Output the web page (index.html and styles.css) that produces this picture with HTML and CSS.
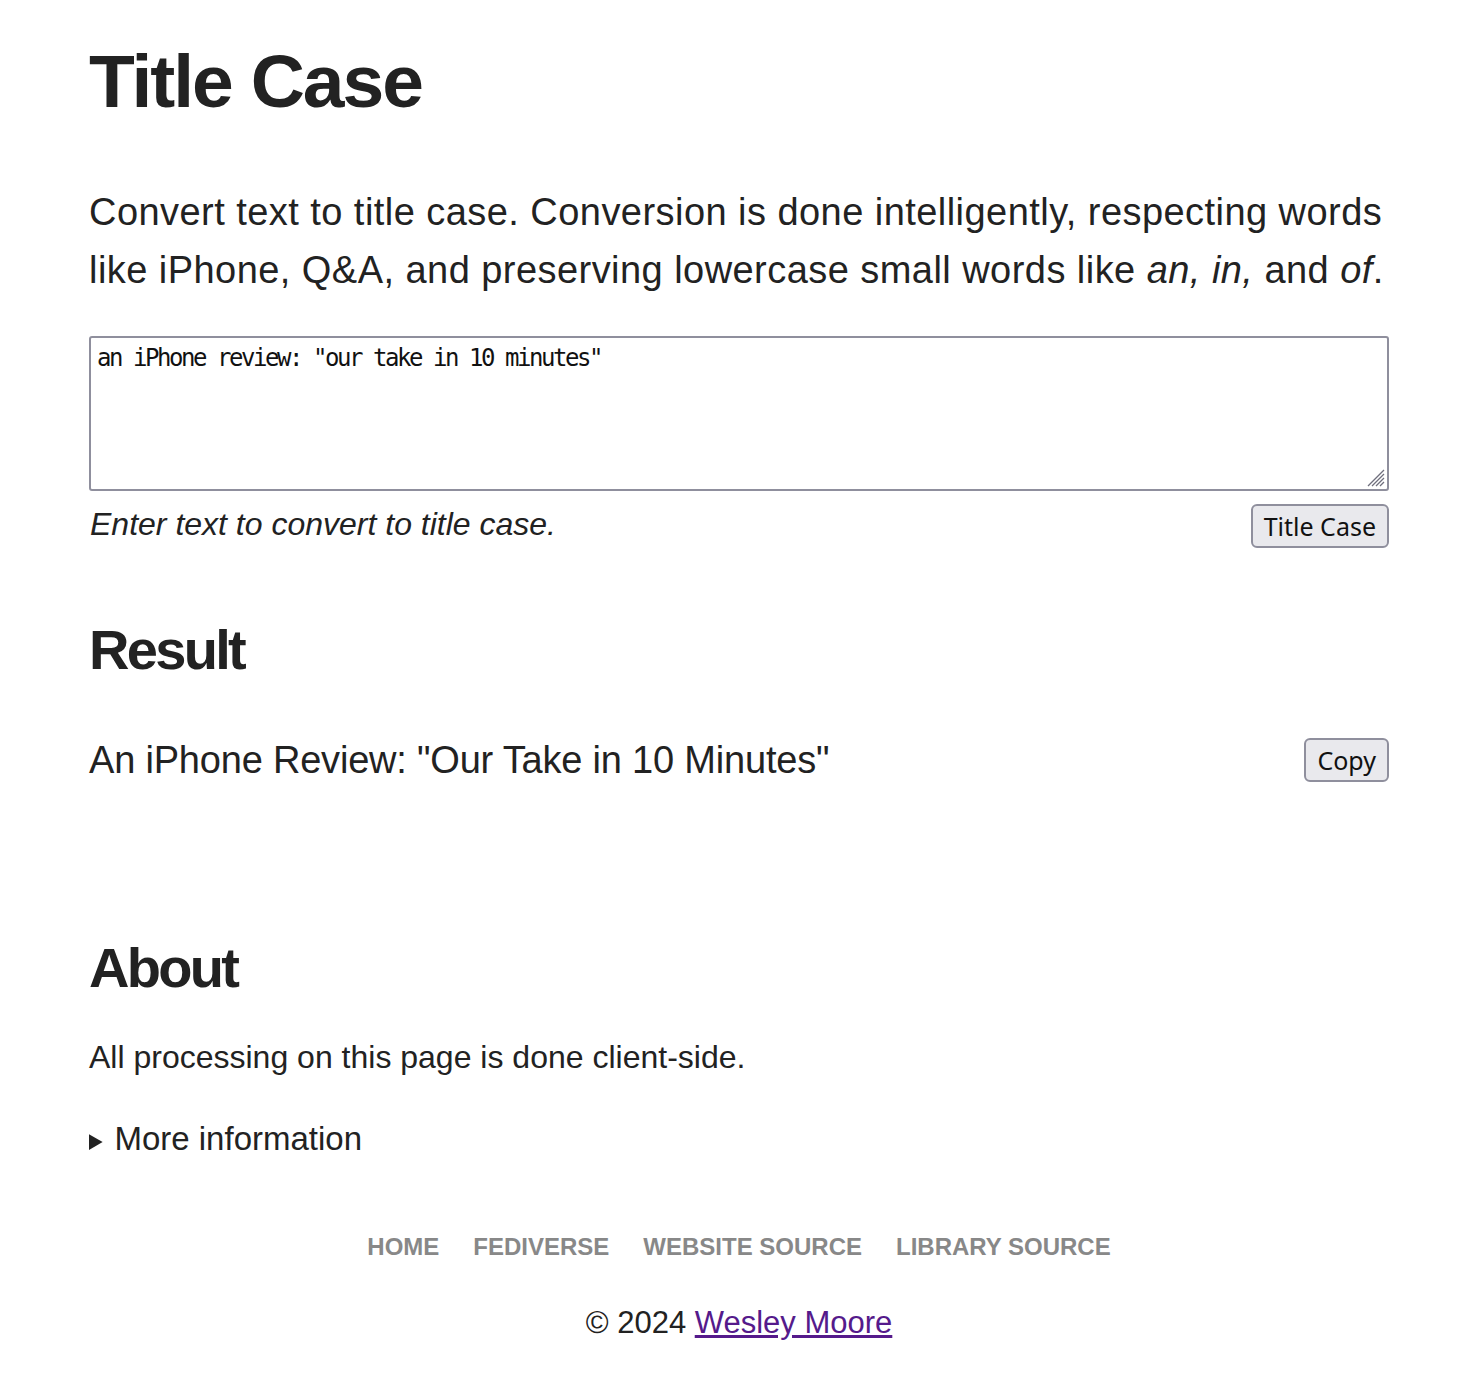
FILE: index.html
```html
<!DOCTYPE html>
<html lang="en">
<head>
<meta charset="utf-8">
<title>Title Case</title>
<link rel="stylesheet" href="styles.css">
</head>
<body>
<main class="page">
  <h1 class="title">Title Case</h1>
  <p class="intro">Convert text to title case. Conversion is done intelligently, respecting words like iPhone, Q&amp;A, and preserving lowercase small words like <em>an,</em> <em>in,</em> and <em>of</em>.</p>
  <form class="converter">
    <div class="field">
      <textarea class="input" spellcheck="false">an iPhone review: "our take in 10 minutes"</textarea>
      <svg class="grip" width="20" height="20" viewBox="0 0 20 20" aria-hidden="true">
        <path d="M19 3 L3 19 M19 7 L7 19 M19 11 L11 19 M19 15 L15 19" stroke="#6f6f7d" stroke-width="1.3" fill="none"/>
      </svg>
    </div>
    <div class="row">
      <span class="hint">Enter text to convert to title case.</span>
      <button type="button" class="btn">Title Case</button>
    </div>
  </form>
  <section class="result">
    <h2 class="heading">Result</h2>
    <div class="row result-row">
      <p class="output">An iPhone Review: "Our Take in 10 Minutes"</p>
      <button type="button" class="btn">Copy</button>
    </div>
  </section>
  <section class="about">
    <h2 class="heading">About</h2>
    <p class="text">All processing on this page is done client-side.</p>
    <details class="more">
      <summary>More information</summary>
    </details>
  </section>
</main>
<footer class="footer">
  <nav class="nav">
    <a href="#">Home</a>
    <a href="#">Fediverse</a>
    <a href="#">Website Source</a>
    <a href="#">Library Source</a>
  </nav>
  <p class="copy">© 2024 <a href="#" class="author">Wesley Moore</a></p>
</footer>
</body>
</html>
```

FILE: styles.css
```css
html, body {
  margin: 0;
  padding: 0;
  background: #fff;
}
body {
  font-family: "Liberation Sans", Arial, sans-serif;
  color: #222;
  font-size: 38px;
  line-height: 58px;
}
.page {
  width: 1300px;
  margin: 0 auto;
  padding-top: 40px;
}
.title {
  font-size: 75px;
  font-weight: bold;
  line-height: 1.1;
  margin: 0 0 60px;
  letter-spacing: -2px;
}
.intro {
  margin: 0 0 37px;
  letter-spacing: 0.45px;
}
.converter {
  margin: 0;
}
.field {
  position: relative;
}
.input {
  display: block;
  box-sizing: border-box;
  width: 1300px;
  height: 155px;
  margin: 0;
  padding: 6px 6px;
  border: 2px solid #8f8f9d;
  border-radius: 3px;
  font-family: "DejaVu Sans Mono", monospace;
  font-size: 24px;
  letter-spacing: -2.45px;
  line-height: 1.2;
  color: #111;
  resize: none;
}
.grip {
  position: absolute;
  right: 4px;
  bottom: 4px;
}
.row {
  display: flex;
  justify-content: space-between;
  align-items: flex-start;
  margin-top: 13px;
}
.hint {
  font-style: italic;
  font-size: 32px;
  line-height: 38px;
  padding-top: 1px;
  padding-left: 1px;
}
.btn {
  box-sizing: border-box;
  height: 44px;
  font-family: "Noto Sans", "Open Sans", sans-serif;
  font-size: 25px;
  line-height: 1.2;
  color: #111;
  background: #e9e9ed;
  border: 2px solid #8f8f9d;
  border-radius: 6px;
  padding: 2px 11px;
  margin: 0;
}
.heading {
  font-size: 56px;
  font-weight: bold;
  line-height: 1.2;
  margin: 0;
  letter-spacing: -2.7px;
}
.result {
  margin-top: 68px;
}
.result-row {
  margin-top: 48px;
  align-items: center;
}
.output {
  margin: 0;
  letter-spacing: -0.2px;
}
.about {
  margin-top: 145px;
}
.text {
  font-size: 32px;
  margin: 27px 0 0;
}
.more {
  margin-top: 24px;
  font-size: 33px;
}
.more summary {
  cursor: pointer;
}
.more summary::marker {
  font-size: 24px;
}
.footer {
  text-align: center;
  margin-top: 56px;
  padding-bottom: 30px;
}
.nav {
  display: flex;
  justify-content: center;
  gap: 34px;
  line-height: 40px;
}
.nav a {
  color: #888;
  text-decoration: none;
  text-transform: uppercase;
  font-weight: bold;
  font-size: 24px;
  letter-spacing: 0;
}
.copy {
  margin: 36px 0 0;
  font-size: 31px;
  line-height: 40px;
}
.author {
  color: #551a8b;
}
```
